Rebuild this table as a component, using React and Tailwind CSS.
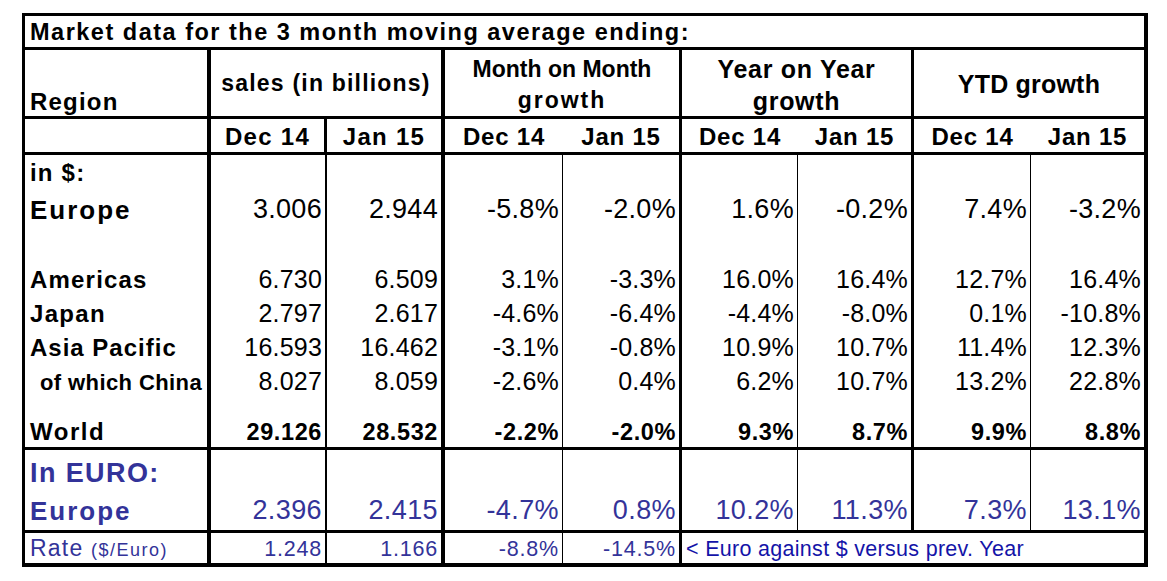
import React from "react";

const FONT = "font-['Liberation_Sans',Arial,sans-serif]";
const COLS = "grid-cols-[186px_116px_118px_118px_119px_116px_116px_117px_117px]";
// right border of each column in the body rows
const RB = [
  "border-r-4",
  "border-r-2",
  "border-r-4",
  "border-r",
  "border-r-[3px]",
  "border-r",
  "border-r-[3px]",
  "border-r",
  "border-r-4",
];

const NUM = "text-[25px] tracking-[0.2px]";

const dollarRows = [
  { label: "in $:", h: "h-[30px]", lab: "text-[24px] tracking-[1.2px]" },
  {
    label: "Europe",
    h: "h-[40px]",
    lab: "text-[26px] tracking-[2px]",
    num: "text-[27px] tracking-[0.3px]",
    pb: "pb-[2px]",
    vals: ["3.006", "2.944", "-5.8%", "-2.0%", "1.6%", "-0.2%", "7.4%", "-3.2%"],
  },
  { label: "", h: "h-[33px]" },
  {
    label: "Americas",
    h: "h-[35px]",
    lab: "text-[24px] tracking-[1.2px]",
    num: NUM,
    pb: "pb-[1px]",
    vals: ["6.730", "6.509", "3.1%", "-3.3%", "16.0%", "16.4%", "12.7%", "16.4%"],
  },
  {
    label: "Japan",
    h: "h-[34px]",
    lab: "text-[24px] tracking-[1.3px]",
    num: NUM,
    pb: "pb-[1px]",
    vals: ["2.797", "2.617", "-4.6%", "-6.4%", "-4.4%", "-8.0%", "0.1%", "-10.8%"],
  },
  {
    label: "Asia Pacific",
    h: "h-[34px]",
    lab: "text-[24px] tracking-[1px]",
    num: NUM,
    pb: "pb-[1px]",
    vals: ["16.593", "16.462", "-3.1%", "-0.8%", "10.9%", "10.7%", "11.4%", "12.3%"],
  },
  {
    label: "of which China",
    h: "h-[34px]",
    lab: "text-[22px] tracking-[0.4px] pl-[10px]",
    num: NUM,
    pb: "pb-[1px]",
    vals: ["8.027", "8.059", "-2.6%", "0.4%", "6.2%", "10.7%", "13.2%", "22.8%"],
  },
  { label: "", h: "h-[20px]" },
  {
    label: "World",
    h: "h-[35px]",
    lab: "text-[24px] tracking-[1.5px]",
    num: "text-[23.5px] font-bold tracking-[0.6px]",
    pb: "pb-[3px]",
    bottom: "border-b-[3px]",
    vals: ["29.126", "28.532", "-2.2%", "-2.0%", "9.3%", "8.7%", "9.9%", "8.8%"],
  },
];

function Row({ label, h, lab = "", num = "", pb = "", bottom = "", vals, color = "text-black" }) {
  return (
    <>
      <div className={`${h} ${RB[0]} ${bottom} border-black flex items-end pl-[5px] ${pb} ${color}`}>
        <span className={`leading-none font-bold whitespace-nowrap ${lab}`}>{label}</span>
      </div>
      {RB.slice(1).map((b, i) => (
        <div
          key={i}
          className={`${h} ${b} ${bottom} border-black flex items-end justify-end pr-[3px] ${pb} ${color}`}
        >
          {vals && <span className={`leading-none whitespace-nowrap ${num}`}>{vals[i]}</span>}
        </div>
      ))}
    </>
  );
}

function SubHead({ border, wide, children }) {
  return (
    <div className={`h-[36px] ${border} border-b-[3px] border-black flex items-end justify-center pb-[3px]`}>
      <span className={`text-[24px] font-bold leading-none ${wide ? "tracking-[1.3px]" : "tracking-[0.8px]"}`}>
        {children}
      </span>
    </div>
  );
}

export default function App() {
  return (
    <div className={`min-h-screen bg-white pt-[13px] pl-[22px] text-black ${FONT}`}>
      <div className={`inline-grid ${COLS} border-l-[3px] border-t-[3px] border-black`}>
        {/* title */}
        <div className="col-span-9 h-[34px] border-r-4 border-b-[3px] border-black flex items-end pl-[5px] pb-[3px]">
          <span className="text-[23.5px] font-bold tracking-[1.5px] leading-none whitespace-nowrap">
            Market data for the 3 month moving average ending:
          </span>
        </div>

        {/* header row 1 */}
        <div className="h-[69px] border-r-4 border-b-[3px] border-black flex items-end pl-[5px] pb-[2px]">
          <span className="text-[24px] font-bold tracking-[1.2px] leading-none">Region</span>
        </div>
        <div className="col-span-2 h-[69px] border-r-4 border-b-[3px] border-black flex items-center justify-center">
          <span className="text-[23px] font-bold tracking-[1.2px] leading-none whitespace-nowrap">
            sales (in billions)
          </span>
        </div>
        <div className="col-span-2 h-[69px] border-r-[3px] border-b-[3px] border-black flex flex-col items-center justify-center pt-[4px] text-[23px] font-bold leading-[31px]">
          <span>Month on Month</span>
          <span className="tracking-[2px]">growth</span>
        </div>
        <div className="col-span-2 h-[69px] border-r-[3px] border-b-[3px] border-black flex flex-col items-center justify-center pt-[3px] text-[25px] font-bold tracking-[0.7px] leading-[32px]">
          <span>Year on Year</span>
          <span>growth</span>
        </div>
        <div className="col-span-2 h-[69px] border-r-4 border-b-[3px] border-black flex items-center justify-center pt-[2px]">
          <span className="text-[25px] font-bold tracking-[0.2px] leading-none">YTD growth</span>
        </div>

        {/* header row 2 */}
        <div className="h-[36px] border-r-4 border-b-[3px] border-black" />
        <SubHead border="border-r-[3px]" wide>Dec 14</SubHead>
        <SubHead border="border-r-4" wide>Jan 15</SubHead>
        <SubHead border="">Dec 14</SubHead>
        <SubHead border="border-r-[3px]">Jan 15</SubHead>
        <SubHead border="">Dec 14</SubHead>
        <SubHead border="border-r-[3px]">Jan 15</SubHead>
        <SubHead border="">Dec 14</SubHead>
        <SubHead border="border-r-4">Jan 15</SubHead>

        {/* in $ section */}
        {dollarRows.map((r, i) => (
          <Row key={i} {...r} />
        ))}

        {/* in EURO section */}
        <Row label="In EURO:" h="h-[38px]" lab="text-[27px] tracking-[1.4px]" pb="pb-[1px]" color="text-[#333399]" />
        <Row
          label="Europe"
          h="h-[45px]"
          lab="text-[26px] tracking-[2px]"
          num="text-[27px] tracking-[0.4px]"
          pb="pb-[6px]"
          bottom="border-b-[3px]"
          color="text-[#333399]"
          vals={["2.396", "2.415", "-4.7%", "0.8%", "10.2%", "11.3%", "7.3%", "13.1%"]}
        />

        {/* rate row */}
        <div className="h-[34px] border-r-4 border-b-4 border-black flex items-end pl-[5px] pb-[3px] text-[#333399]">
          <span className="text-[23px] tracking-[1.2px] leading-none whitespace-nowrap">
            Rate <span className="text-[18px] tracking-[1.5px]">($/Euro)</span>
          </span>
        </div>
        {[
          ["1.248", "border-r-2"],
          ["1.166", "border-r-4"],
          ["-8.8%", "border-r"],
          ["-14.5%", "border-r-[3px]"],
        ].map(([v, b]) => (
          <div
            key={v}
            className={`h-[34px] ${b} border-b-4 border-black flex items-end justify-end pr-[3px] pb-[3px] text-[#333399]`}
          >
            <span className="text-[21.5px] tracking-[0.8px] leading-none">{v}</span>
          </div>
        ))}
        <div className="col-span-4 h-[34px] border-r-4 border-b-4 border-black flex items-end pl-[4px] pb-[3px] text-[#1414a8]">
          <span className="text-[21.5px] tracking-[0.3px] leading-none whitespace-nowrap">
            &lt; Euro against $ versus prev. Year
          </span>
        </div>
      </div>
    </div>
  );
}
